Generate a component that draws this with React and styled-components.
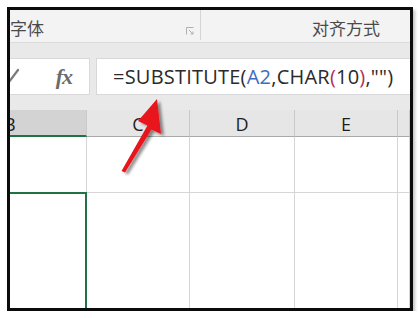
import React from 'react';
import styled, { createGlobalStyle } from 'styled-components';

const GlobalStyle = createGlobalStyle`
  body {
    margin: 0;
    background: #ffffff;
    font-family: "Open Sans", "Noto Sans CJK SC", sans-serif;
  }
`;

const Frame = styled.div`
  position: relative;
  box-sizing: border-box;
  margin: 7px 0 0 7px;
  width: 406px;
  height: 304px;
  border: 3px solid #0b0b0b;
  overflow: hidden;
  box-shadow: 2px 3px 3px rgba(0, 0, 0, 0.25);
  background: #ffffff;
`;

const Ribbon = styled.div`
  display: flex;
  align-items: stretch;
  height: 32px;
  background: #f3f3f3;
  border-bottom: 1px solid #dcdcdc;
`;

const Group = styled.div`
  display: flex;
  align-items: center;
  justify-content: ${(p) => (p.$center ? 'flex-start' : 'space-between')};
  width: ${(p) => p.$width || 'auto'};
  flex: ${(p) => (p.$width ? 'none' : '1')};
  padding-left: ${(p) => p.$indent || '0px'};
  padding-right: ${(p) => p.$right || '0px'};
  box-sizing: border-box;
`;

const GroupLabel = styled.span`
  font-family: "Noto Sans CJK SC", sans-serif;
  font-size: 17px;
  color: #4a4a4a;
  padding-top: 3px;
`;

const Launcher = styled.svg`
  width: 8px;
  height: 8px;
  margin-top: 10px;
`;

const Separator = styled.div`
  width: 1px;
  margin: 0 0 2px 0;
  background: #d4d4d4;
`;

const FormulaArea = styled.div`
  display: flex;
  gap: 6px;
  padding: 15px 0;
  background: #e9e9e9;
`;

const NameTail = styled.div`
  position: relative;
  display: flex;
  align-items: center;
  justify-content: flex-end;
  box-sizing: border-box;
  width: 80px;
  height: 37px;
  padding-right: 17px;
  background: #ffffff;
  border: 1px solid #d8d8d8;
  border-left: none;
`;

const Check = styled.svg`
  position: absolute;
  left: -2px;
  top: 9px;
  width: 12px;
  height: 16px;
`;

const Fx = styled.span`
  font-family: "Liberation Serif", serif;
  font-style: italic;
  font-weight: bold;
  font-size: 22px;
  color: #6b6b6b;
  letter-spacing: -1px;
`;

const FormulaBox = styled.div`
  flex: 1;
  display: flex;
  align-items: center;
  box-sizing: border-box;
  height: 37px;
  margin-right: -8px;
  padding-left: 16px;
  background: #ffffff;
  border: 1px solid #d8d8d8;
  font-family: "Open Sans", sans-serif;
  font-size: 20px;
  letter-spacing: 0.22px;
  color: #2a2a2a;
  white-space: nowrap;
`;

const Tok = styled.span`
  color: ${(p) => p.$c || '#2a2a2a'};
`;

const Grid = styled.div`
  display: grid;
  grid-template-columns: 77px 103px 105px 103px 1fr;
  grid-template-rows: 27px 56px 1fr;
  height: 199px;
`;

const Header = styled.div`
  display: flex;
  align-items: center;
  justify-content: ${(p) => (p.$cut ? 'flex-start' : 'center')};
  box-sizing: border-box;
  background: ${(p) => (p.$selected ? '#d3d3d3' : '#e6e6e6')};
  border-right: 1px solid #c9c9c9;
  border-bottom: ${(p) => (p.$selected ? '2px solid #217346' : '1px solid #a9a9a9')};
  font-family: "Open Sans", sans-serif;
  font-size: 18px;
  color: #1e1e1e;
  padding-top: 2px;
  overflow: hidden;
`;

const CutLetter = styled.span`
  margin-left: -6px;
`;

const Cell = styled.div`
  box-sizing: border-box;
  border-right: 1px solid #d6d6d6;
  border-bottom: 1px solid #d6d6d6;
  ${(p) =>
    p.$active &&
    `
    border-top: 2px solid #217346;
    border-right: 2px solid #217346;
    margin-top: -1px;
  `}
`;

const ArrowLayer = styled.svg`
  position: absolute;
  left: 0;
  top: 0;
  width: 400px;
  height: 298px;
  pointer-events: none;
`;

function Arrow() {
  return (
    <ArrowLayer viewBox="0 0 400 298">
      <defs>
        <filter id="shadow" x="-50%" y="-50%" width="200%" height="200%">
          <feGaussianBlur in="SourceAlpha" stdDeviation="1.6" />
          <feOffset dx="3" dy="2" result="blur" />
          <feComponentTransfer>
            <feFuncA type="linear" slope="0.45" />
          </feComponentTransfer>
          <feMerge>
            <feMergeNode />
            <feMergeNode in="SourceGraphic" />
          </feMerge>
        </filter>
      </defs>
      <polygon
        filter="url(#shadow)"
        fill="#e8141b"
        points="147,89 151,124 141.5,119.5 115,162.5 111.5,161 137.5,115.5 128,111"
      />
    </ArrowLayer>
  );
}

export default function App() {
  return (
    <>
      <GlobalStyle />
      <Frame>
        <Ribbon>
          <Group $width="190px" $right="6px">
            <GroupLabel>字体</GroupLabel>
            <Launcher viewBox="0 0 8 8">
              <path d="M0.5 7.5V0.5h7" fill="none" stroke="#b0b0b0" strokeWidth="1" />
              <path d="M3 3l4 4M7 4.5V7H4.5" fill="none" stroke="#b0b0b0" strokeWidth="1" />
            </Launcher>
          </Group>
          <Separator />
          <Group $center $indent="111px">
            <GroupLabel>对齐方式</GroupLabel>
          </Group>
        </Ribbon>
        <FormulaArea>
          <NameTail>
            <Check viewBox="0 0 12 16">
              <path d="M1 14L10 2" stroke="#7a7a7a" strokeWidth="2.2" strokeLinecap="round" />
            </Check>
            <Fx>fx</Fx>
          </NameTail>
          <FormulaBox>
            <Tok>=SUBSTITUTE(</Tok>
            <Tok $c="#3b6dc0">A2</Tok>
            <Tok>,CHAR</Tok>
            <Tok $c="#b03060">(</Tok>
            <Tok>10</Tok>
            <Tok $c="#b03060">)</Tok>
            <Tok>,"")</Tok>
          </FormulaBox>
        </FormulaArea>
        <Grid>
          <Header $selected $cut>
            <CutLetter>B</CutLetter>
          </Header>
          <Header>C</Header>
          <Header>D</Header>
          <Header>E</Header>
          <Header />
          <Cell />
          <Cell />
          <Cell />
          <Cell />
          <Cell />
          <Cell $active />
          <Cell />
          <Cell />
          <Cell />
          <Cell />
        </Grid>
        <Arrow />
      </Frame>
    </>
  );
}
